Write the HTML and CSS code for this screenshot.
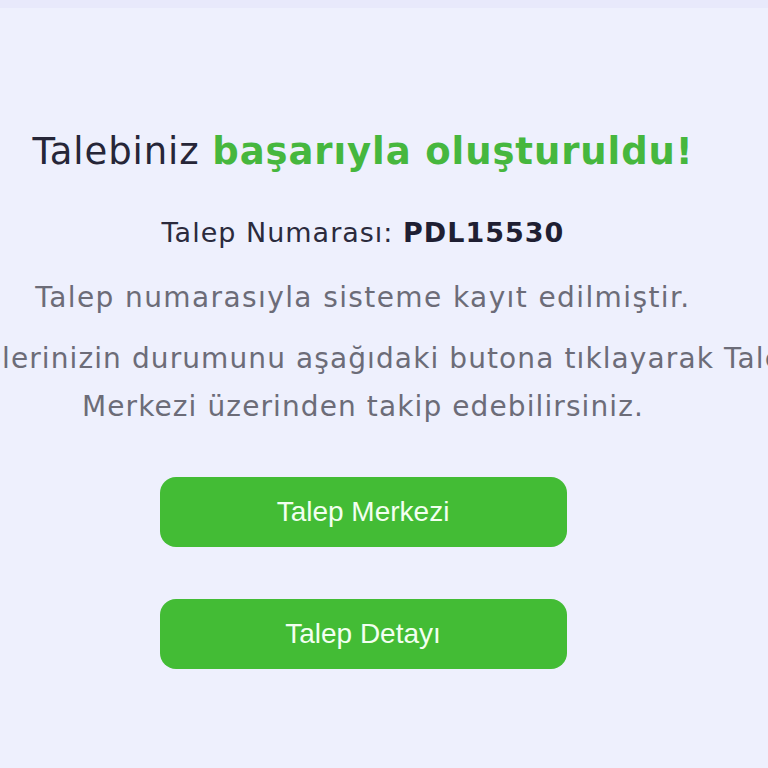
FILE: index.html
```html
<!DOCTYPE html>
<html lang="tr">
<head>
<meta charset="utf-8">
<link rel="stylesheet" href="styles.css">
</head>
<body>
<div class="topbar"></div>
<main class="content">
  <h1 class="title">Talebiniz <span class="ok">başarıyla oluşturuldu!</span></h1>
  <p class="number">Talep Numarası: <strong>PDL15530</strong></p>
  <p class="info">Talep numarasıyla sisteme kayıt edilmiştir.</p>
  <p class="info track">Taleplerinizin durumunu aşağıdaki butona tıklayarak Talep<br>Merkezi üzerinden takip edebilirsiniz.</p>
  <div class="actions">
    <a class="btn">Talep Merkezi</a>
    <a class="btn">Talep Detayı</a>
  </div>
</main>
</body>
</html>
```
FILE: styles.css
```css
html, body {
  margin: 0;
  padding: 0;
  width: 768px;
  height: 768px;
  overflow: hidden;
  background: #eef0fd;
}
.topbar {
  height: 8px;
  background: #e8e9fb;
}
.content {
  width: 1100px;
  margin-left: -187px;
  display: flex;
  flex-direction: column;
  align-items: center;
  text-align: center;
  font-family: "DejaVu Sans", sans-serif;
  white-space: nowrap;
}
.title {
  margin: 120px 0 0;
  font-size: 37px;
  font-weight: 400;
  letter-spacing: 0.9px;
  line-height: 48px;
  color: #262638;
}
.ok {
  color: #46b73e;
  font-weight: 700;
}
.number {
  margin: 39px 0 0;
  font-size: 27px;
  letter-spacing: 1px;
  line-height: 36px;
  color: #2b2b3d;
}
.number strong {
  font-weight: 700;
  color: #1f1f33;
}
.info {
  margin: 29px 0 0;
  font-size: 28px;
  letter-spacing: 1.4px;
  line-height: 36px;
  color: #6c6c78;
}
.track {
  margin-top: 19px;
  letter-spacing: 1.1px;
  line-height: 48px;
}
.actions {
  margin-top: 46px;
  display: flex;
  flex-direction: column;
  gap: 52px;
}
.btn {
  display: flex;
  align-items: center;
  justify-content: center;
  width: 407px;
  height: 70px;
  border-radius: 16px;
  background: #43bc35;
  color: #f2fff0;
  font-family: "Liberation Sans", Arial, sans-serif;
  font-size: 28px;
  letter-spacing: 0;
}
```
